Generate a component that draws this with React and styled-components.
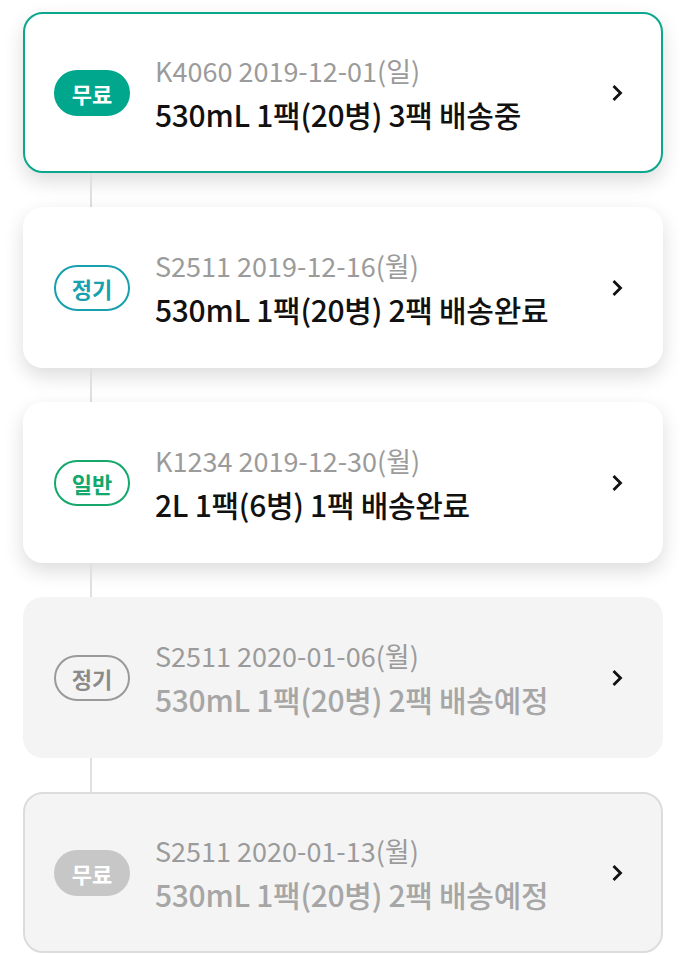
import React from "react"
import styled, {createGlobalStyle, css} from "styled-components"

const GlobalStyle = createGlobalStyle`
  body {
    margin: 0;
    background: #fff;
    font-family: "Noto Sans CJK KR", "Noto Sans", sans-serif;
  }
`

const List = styled.div`
  display: flex;
  flex-direction: column;
  padding: 12px 22px 0 23px;
`

const Connector = styled.div`
  width: 2px;
  height: 34px;
  margin-left: 67px;
  background: #e0e0e0;
`

const cardLooks = {
  active: css`
    background: #fff;
    border: 2px solid #0aa78d;
    box-shadow: 0 8px 20px rgba(0, 0, 0, 0.14);
  `,
  done: css`
    background: #fff;
    border: 2px solid transparent;
    box-shadow: 0 8px 20px rgba(0, 0, 0, 0.14);
  `,
  planned: css`
    background: #f4f4f4;
    border: 2px solid transparent;
  `,
  plannedFree: css`
    background: #f4f4f4;
    border: 2px solid #dcdcdc;
  `,
}

const Card = styled.div`
  box-sizing: border-box;
  height: 161px;
  border-radius: 20px;
  display: flex;
  align-items: center;
  padding: 0 38px 0 29px;
  ${({look}) => cardLooks[look]}
`

const badgeLooks = {
  free: css`
    background: #00a78c;
    border-color: #00a78c;
    color: #fff;
  `,
  regular: css`
    background: transparent;
    border-color: #17a0ad;
    color: #17a0ad;
  `,
  normal: css`
    background: transparent;
    border-color: #14a86c;
    color: #14a86c;
  `,
  regularOff: css`
    background: transparent;
    border-color: #9a9a9a;
    color: #8a8a8a;
  `,
  freeOff: css`
    background: #c7c7c7;
    border-color: #c7c7c7;
    color: #fff;
  `,
}

const Badge = styled.div`
  box-sizing: border-box;
  flex: none;
  width: 76px;
  height: 46px;
  border-radius: 23px;
  border: 2px solid;
  display: flex;
  align-items: center;
  justify-content: center;
  font-size: 22px;
  font-weight: 700;
  ${({look}) => badgeLooks[look]}
`

const Info = styled.div`
  flex: 1;
  display: flex;
  flex-direction: column;
  margin-left: 25px;
  padding-top: 3px;
`

const Meta = styled.div`
  font-size: 27px;
  line-height: 38px;
  color: #9b9b9b;
`

const Title = styled.div`
  font-size: 30px;
  line-height: 44px;
  margin-top: 2px;
  font-weight: 500;
  letter-spacing: -0.3px;
  color: ${({muted}) => (muted ? "#a6a6a6" : "#111")};
`

const Chevron = () => (
  <svg width="12" height="18" viewBox="0 0 12 18">
    <path d="M2.5 2 L9.5 9 L2.5 16" fill="none" stroke="#111" strokeWidth="2.8" />
  </svg>
)

const orders = [
  {look: "active", badge: "free", label: "무료", meta: "K4060 2019-12-01(일)", title: "530mL 1팩(20병) 3팩 배송중"},
  {look: "done", badge: "regular", label: "정기", meta: "S2511 2019-12-16(월)", title: "530mL 1팩(20병) 2팩 배송완료"},
  {look: "done", badge: "normal", label: "일반", meta: "K1234 2019-12-30(월)", title: "2L 1팩(6병) 1팩 배송완료"},
  {look: "planned", badge: "regularOff", label: "정기", meta: "S2511 2020-01-06(월)", title: "530mL 1팩(20병) 2팩 배송예정", muted: true},
  {look: "plannedFree", badge: "freeOff", label: "무료", meta: "S2511 2020-01-13(월)", title: "530mL 1팩(20병) 2팩 배송예정", muted: true},
]

export default function App() {
  return (
    <>
      <GlobalStyle />
      <List>
        {orders.map((o, i) => (
          <React.Fragment key={i}>
            {i > 0 && <Connector />}
            <Card look={o.look}>
              <Badge look={o.badge}>{o.label}</Badge>
              <Info>
                <Meta>{o.meta}</Meta>
                <Title muted={o.muted}>{o.title}</Title>
              </Info>
              <Chevron />
            </Card>
          </React.Fragment>
        ))}
      </List>
    </>
  )
}
